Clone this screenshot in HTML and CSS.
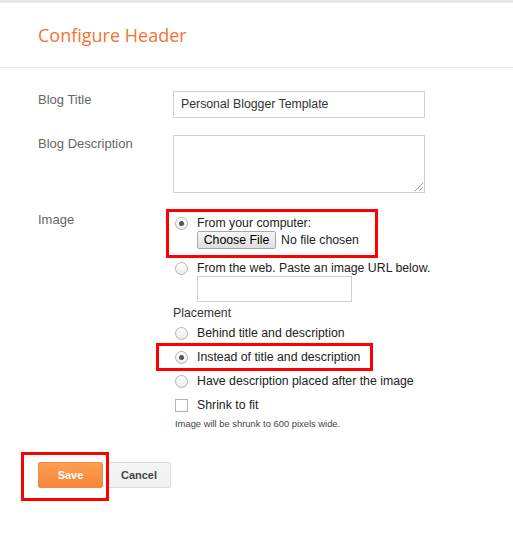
FILE: index.html
```html
<!DOCTYPE html>
<html>
<head>
<meta charset="utf-8">
<link rel="stylesheet" href="styles.css">
</head>
<body>
<div class="page">
  <header class="hdr"><h1 class="title">Configure Header</h1></header>
  <div class="form">
    <div class="row row-title">
      <label class="lbl">Blog Title</label>
      <div class="field"><div class="input text">Personal Blogger Template</div></div>
    </div>
    <div class="row row-desc">
      <label class="lbl">Blog Description</label>
      <div class="field"><div class="textarea"><span class="grip"></span></div></div>
    </div>
    <div class="row row-image">
      <label class="lbl">Image</label>
      <div class="field opts">
        <div class="group">
          <div class="opt opt1"><span class="radio on"></span><span>From your computer:</span></div>
          <div class="filerow"><span class="filebtn">Choose File</span><span class="nofile">No file chosen</span></div>
          <span class="mark mark1"></span>
        </div>
        <div class="opt opt2"><span class="radio"></span><span>From the web. Paste an image URL below.</span></div>
        <div class="urlrow"><div class="input url"></div></div>
        <div class="placement">Placement</div>
        <div class="opt optp"><span class="radio"></span><span>Behind title and description</span></div>
        <div class="opt optp"><span class="radio on"></span><span>Instead of title and description</span><span class="mark mark2"></span></div>
        <div class="opt optp"><span class="radio"></span><span>Have description placed after the image</span></div>
        <div class="opt optp"><span class="check"></span><span>Shrink to fit</span></div>
        <div class="note">Image will be shrunk to 600 pixels wide.</div>
      </div>
    </div>
    <div class="buttons">
      <span class="btn save">Save</span>
      <span class="btn cancel">Cancel</span>
      <span class="mark mark3"></span>
    </div>
  </div>
</div>
</body>
</html>
```
FILE: styles.css
```css
* { box-sizing: border-box; }
html, body { margin: 0; padding: 0; background: #fff; }
body { font-family: "Liberation Sans", Arial, sans-serif; color: #222; min-height: 554px; }
.page { border-top: 3px solid #e6e6e6; width: 513px; padding-bottom: 60px; }
.hdr { height: 65px; border-bottom: 1px solid #e5e5e5; padding: 20px 0 0 38px; }
.title { margin: 0; font-family: "Open Sans", sans-serif; font-weight: 400; font-size: 18px; line-height: 25px; color: #f4742f; }
.form { padding: 23px 0 0 38px; }
.row { display: grid; grid-template-columns: 135px 252px; margin-bottom: 18px; }
.row-title { margin-bottom: 17px; }
.row-desc { margin-bottom: 19px; }
.lbl { font-size: 13px; line-height: 15px; color: #666; }
.row-title .lbl, .row-desc .lbl { padding-top: 1px; }
.input { border: 1px solid #d0d0d0; background: #fff; }
.text { height: 27px; width: 252px; padding: 0 7px; font-size: 12.3px; line-height: 25px; color: #333; }
.textarea { position: relative; height: 58px; width: 252px; border: 1px solid #cfcfcf; }
.grip { position: absolute; right: 1px; bottom: 1px; width: 8px; height: 8px;
  background: linear-gradient(135deg, transparent 45%, #999 45%, #999 55%, transparent 55%, transparent 70%, #999 70%, #999 80%, transparent 80%); }
.opts { padding-top: 3px; font-size: 12.3px; color: #222; white-space: nowrap; }
.group { position: relative; }
.opt { display: flex; align-items: center; padding-left: 2px; }
.opt1 { height: 16px; }
.opt2 { height: 16px; margin-top: 11px; }
.radio { width: 13px; height: 13px; border-radius: 50%; border: 1px solid #b4b4b4; margin-right: 9px; flex: none;
  background: linear-gradient(#fff, #ececec); display: flex; align-items: center; justify-content: center; }
.radio.on::after { content: ""; width: 5px; height: 5px; border-radius: 50%; background: #555; }
.check { width: 13px; height: 13px; border: 1px solid #b4b4b4; background: #fff; margin-right: 9px; flex: none; }
.filerow { display: flex; align-items: center; padding-left: 24px; height: 18px; }
.filebtn { height: 18px; width: 79px; border: 1px solid #a9a9a9; border-radius: 2px; background: linear-gradient(#f6f6f6, #dedede);
  font-size: 12.3px; line-height: 16px; text-align: center; color: #000; }
.nofile { margin-left: 5px; color: #222; }
.urlrow { padding-left: 24px; }
.url { width: 155px; height: 26px; }
.placement { line-height: 16px; margin-top: 3px; color: #333; }
.optp { height: 24px; position: relative; }
.note { font-size: 9.4px; line-height: 12px; color: #444; padding-left: 2px; margin-top: 1px; }
.mark { position: absolute; border: 3px solid #ff0000; pointer-events: none; }
.mark1 { left: -7px; top: -6px; width: 212px; height: 49px; }
.mark2 { left: -17px; top: -2px; width: 217px; height: 28px; }
.buttons { position: relative; display: flex; gap: 4px; margin-top: 32px; }
.btn { height: 26px; display: flex; align-items: center; justify-content: center; font-size: 11px; font-weight: bold; border-radius: 2px; }
.save { width: 65px; color: #fff; background: linear-gradient(#fe9d53, #f5863a); border: 1px solid #ef8b42; }
.cancel { width: 64px; color: #444; background: linear-gradient(#f5f5f5, #f1f1f1); border: 1px solid #dcdcdc; }
.mark3 { left: -17px; top: -10px; width: 88px; height: 49px; }
```
